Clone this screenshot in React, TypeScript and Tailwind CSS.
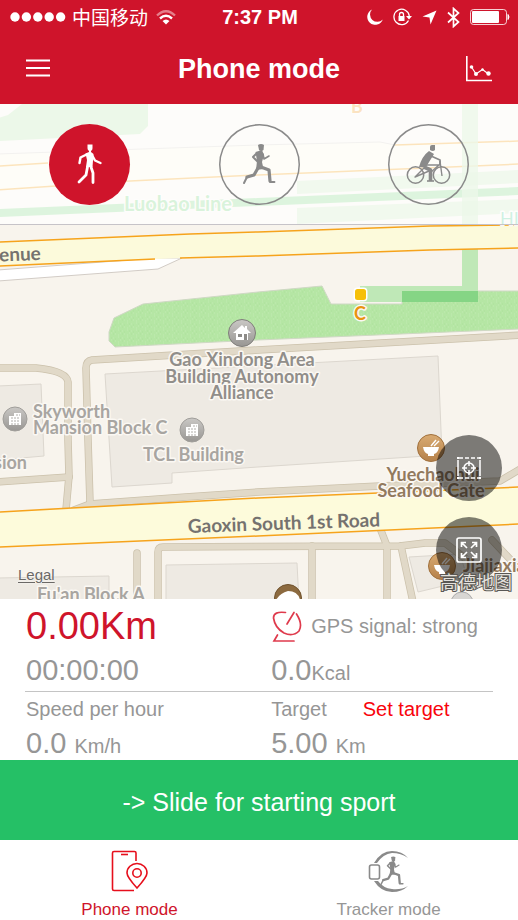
import { useState } from "react";

type Mode = "walk" | "run" | "bike";

const MINOR_ROADS = [
  "M-4 368 H36 Q67 371 68 382 V440 L69 476 L66 510",
  "M-4 482 L69 477",
  "M522 335 L258 350 L92 360 Q86 361 86 368 L88 440 L90 503",
  "M74 510 L90 504 L186 497 L258 492 L380 486 L500 481 L522 468",
  "M137 553 V602",
  "M158 602 V552 Q158 547 163 547 L400 546 L425 543 H445 L470 562",
  "M312 546 V602",
  "M380 528 L387 546 V602",
  "M401 546 L413 602",
  "M492 540 L522 572",
];

const BLOCKS = [
  "M105 374 L438 356 L442 455 L258 467 L172 473 V483 L112 487 Z",
  "M-2 386 L41 384 L44 456 L-2 460 Z",
  "M166 565 L297 563 L299 602 H166 Z",
  "M-2 578 L109 576 V602 H-2 Z",
  "M409 557 L460 554 L468 580 L418 592 Z",
];

function BuildingPin({ x, y }: { x: number; y: number }) {
  return (
    <g transform={`translate(${x} ${y})`}>
      <circle r="12" fill="url(#grayPin)" stroke="#a09e9a" />
      <path d="M-6 -3 H-1 V-6 H6 V6 H-6 Z" fill="#fff" />
      <path d="M-4 -1 H5 M-4 2 H5 M1 -4 H5 M-4 5 H5" stroke="#b0aeaa" strokeDasharray="2 1" />
    </g>
  );
}

function FoodPin({ x, y }: { x: number; y: number }) {
  return (
    <g transform={`translate(${x} ${y})`}>
      <circle r="13.5" fill="url(#brownPin)" stroke="#a0703c" />
      <path d="M-8 -1 H8 Q7 5 3 6 V8 H-3 V6 Q-7 5 -8 -1 Z" fill="#fff" />
      <path d="M0 -2 L5 -8 M3 -2 L8 -7" stroke="#fff" strokeWidth="1.4" />
    </g>
  );
}

function MapCanvas() {
  return (
    <svg
      viewBox="0 104 518 495"
      preserveAspectRatio="xMidYMid slice"
      className="absolute inset-0 h-full w-full font-[Lato,'Open_Sans',sans-serif]"
      aria-label="Map"
    >
      <defs>
        <linearGradient id="grayPin" x1="0" y1="0" x2="0" y2="1">
          <stop offset="0" stopColor="#cac8c5" />
          <stop offset="1" stopColor="#989693" />
        </linearGradient>
        <linearGradient id="brownPin" x1="0" y1="0" x2="0" y2="1">
          <stop offset="0" stopColor="#d9ab72" />
          <stop offset="1" stopColor="#b5814a" />
        </linearGradient>
        <pattern id="grass" width="9" height="7" patternUnits="userSpaceOnUse">
          <rect width="9" height="7" fill="#b5e6a4" />
          <path d="M1 1 h1 M5 2 h1 M3 4 h1 M7 5 h1 M1 6 h1" stroke="#c2ebb3" />
          <path d="M3 2 h1 M7 3 h1 M5 5 h1" stroke="#ade19c" />
        </pattern>
      </defs>
      <rect y="100" width="518" height="500" fill="#f8f4ed" />

      {/* upper avenue and metro */}
      <path d="M-2 118 L8 115 L22 104 H148 V126 L140 134 L-2 141 Z" fill="#bfe6b5" />
      <path d="M-2 154 L258 145 L380 142 L395 145 L520 141 V164 L258 175 L-2 190 Z" fill="#fbf9e6" />
      <path d="M-2 154 L258 145 L380 142 L395 145" fill="none" stroke="#d6d2cc" />
      <path d="M-2 166 L48 163 M395 145 L520 141 M-2 190 L130 181 L258 175 L520 164" fill="none" stroke="#f6a623" strokeWidth="1.5" />
      <path d="M297 181 L520 170 V183 L297 194 Z M297 208 L520 199 V213 L297 224 Z" fill="#bfe6b5" opacity=".7" />
      <path d="M-2 213 L258 202 L520 191" fill="none" stroke="#8edb92" strokeWidth="8" />
      <path d="M462 104 H478 V232 H462 Z" fill="#bfe6b5" opacity=".8" />

      {BLOCKS.map((d) => (
        <path key={d} d={d} fill="#eeeae3" stroke="#dcd7cf" />
      ))}
      <g fill="none" strokeLinejoin="round" strokeLinecap="round">
        {MINOR_ROADS.map((d) => (
          <path key={d} d={d} stroke="#cbc1ab" strokeWidth="7.5" />
        ))}
        {MINOR_ROADS.map((d) => (
          <path key={d} d={d} stroke="#e1d9c8" strokeWidth="6" />
        ))}
      </g>

      {/* park and station passage */}
      <path
        d="M114 318 L143 304 L258 292 L322 286 L331 304 H402 V291 H520 V329 L258 340 L115 347 L109 341 V332 Z"
        fill="url(#grass)"
        stroke="#cfd8c4"
      />
      <path d="M462 246 H478 V302 H360 V286 H462 Z" fill="#bfe8b7" />
      <path d="M402 291 H478 V302 H402 Z" fill="#85d585" />

      <path d="M-2 270 L155 258 H182 L158 269 L-2 281 Z" fill="#fff" stroke="#d2ccc6" />
      <path d="M-2 242 L190 234 L258 232 L345 229 L430 226 L520 225 V248 L430 250 L258 256 L180 258 L-2 266 Z" fill="#fcfadb" />
      <path
        d="M-2 242 L190 234 L258 232 L345 229 L430 226 L520 225 M-2 266 L155 259 M180 258 L258 256 L430 250 L520 248"
        fill="none"
        stroke="#f6a31c"
        strokeWidth="1.5"
      />
      <path d="M-2 512 L258 498 L520 487 V524 L258 536 L-2 547 Z" fill="#fdfbdb" />
      <path d="M-2 512 L258 498 L520 487 M-2 547 L258 536 L520 524" fill="none" stroke="#f6a31c" strokeWidth="1.5" />

      <g transform="translate(242 333)">
        <circle r="13.5" fill="url(#grayPin)" stroke="#7f7d7a" />
        <path d="M-9 0 L0 -8 L3 -5 V-7 H5 V-4 L9 0 H6 V7 H-6 V0 Z" fill="#fff" />
        <path d="M-4 1 H0 V4 H-4 Z M2 1 H5 V7 H2 Z" fill="#8d8b88" />
      </g>
      <BuildingPin x={15} y={419} />
      <BuildingPin x={192} y={430} />
      <FoodPin x={431} y={448} />
      <FoodPin x={442} y={566} />
      <g transform="translate(288 598)">
        <circle r="13.5" fill="#8c6a3f" stroke="#6f522d" />
        <path d="M-12 2 Q-8 -5 0 -7 Q10 -7 12 2 Z" fill="#fff" />
      </g>
      <circle cx="462" cy="603" r="11" fill="#d8d6d3" stroke="#aaa" />

      <rect x="355" y="289" width="11" height="11" rx="2.5" fill="#f6c008" stroke="#fff" strokeWidth="3" className="[paint-order:stroke]" />

      <g fontSize="18" fontWeight="700" stroke="#fbf8f3" strokeWidth="3" strokeLinejoin="round" className="[paint-order:stroke]">
        <g fill="#918e8a" textAnchor="middle">
          <text x="242" y="366">Gao Xindong Area</text>
          <text x="242" y="383">Building Autonomy</text>
          <text x="242" y="399">Alliance</text>
        </g>
        <g fill="#a8a5a1">
          <text x="33" y="418">Skyworth</text>
          <text x="33" y="434">Mansion Block C</text>
          <text x="143" y="461">TCL Building</text>
          <text x="27" y="469" textAnchor="end">Mansion</text>
          <text x="37" y="601">Fu'an Block A</text>
        </g>
        <g fill="#927a5e">
          <text x="433" y="481" textAnchor="middle">Yuechaohui</text>
          <text x="431" y="497" textAnchor="middle">Seafood Cate</text>
          <text x="463" y="572">Jiajiaxiang</text>
        </g>
        <text x="360" y="320" fill="#e8940f" textAnchor="middle">C</text>
        <text x="357" y="113" fill="#f0a030" textAnchor="middle">B</text>
        <text x="124" y="211" fill="#7fd688" fontSize="20">Luobao Line</text>
        <text x="500" y="225" fill="#5fd0a0" fontWeight="400">HIGH</text>
      </g>
      <g fontWeight="700" fill="#75726f" stroke="#fdfbdb" strokeWidth="3" className="[paint-order:stroke]">
        <text x="41" y="260" fontSize="19" textAnchor="end" transform="rotate(-2 41 260)">Avenue</text>
        <text x="188" y="533" fontSize="19" transform="rotate(-2 188 533)">Gaoxin South 1st Road</text>
      </g>
    </svg>
  );
}

function WalkIcon() {
  return (
    <svg viewBox="0 0 81 81" className="h-full w-full" fill="none" stroke="currentColor" strokeLinecap="round" strokeLinejoin="round">
      <path d="M38.5 20.5 H43.5 V24 Q43.5 27 41 27 Q38.5 27 38.5 24 Z" fill="currentColor" stroke="none" />
      <path d="M36.500 29.500 L40 28 V26 H42 V28 L44.500 30 L43.500 43 H37 L38 36 Z" fill="currentColor" stroke="none" />
      <path d="M37.500 30.500 L31.500 33.500 L30.500 39" strokeWidth="2.400" />
      <path d="M43 31 L46 36.500 L51.500 39" strokeWidth="2.400" />
      <path d="M38.500 43 L37 51 L30 58" strokeWidth="2.800" />
      <path d="M42 43 L44 49 V58.500" strokeWidth="2.800" />
    </svg>
  );
}

function Runner() {
  return (
    <g fill="none" stroke="currentColor" strokeLinecap="round" strokeLinejoin="round">
      <path d="M39 21 Q42 19 45 21 L44.500 26 Q42 28 40 26 Z" fill="currentColor" stroke="none" />
      <path d="M36.500 28 L43 26 L45 31 L43 38 L44.500 45 L37 46 L38 37 Z" fill="currentColor" stroke="none" />
      <path d="M38 29 L34 33 L39 38" strokeWidth="2" />
      <path d="M44 30 L45 35 L50 32" strokeWidth="1.600" />
      <path d="M42 43 L50 46 L51 57" strokeWidth="3.200" />
      <path d="M51 58 H55.500" strokeWidth="1.800" />
      <path d="M39 44 L35 51 L28 53" strokeWidth="3.200" />
      <path d="M28 53 L25 59" strokeWidth="2" />
    </g>
  );
}

function RunIcon() {
  return (
    <svg viewBox="0 0 81 81" className="h-full w-full">
      <Runner />
    </svg>
  );
}

function BikeIcon() {
  return (
    <svg viewBox="0 0 81 81" className="h-full w-full" fill="none" stroke="currentColor" strokeLinejoin="round">
      <circle cx="27.500" cy="51" r="8.200" strokeWidth="1.500" />
      <circle cx="53.500" cy="51" r="8.200" strokeWidth="1.500" />
      <path d="M42 23 Q42 21 44 21 H47 V26 Q45 28 42 26 Z" fill="currentColor" stroke="none" />
      <path d="M41 27 L46 30 L38 43 L42 44 L31 43 Q34 32 41 27 Z" fill="currentColor" stroke="none" />
      <path d="M43 32 L52 36 V41" strokeWidth="1.800" />
      <path d="M52 37 L54 52 M52 41 L37 41 M52 40 L42 49 M37 43 L27 53 L41 47" strokeWidth="1.400" />
      <path d="M36 43 L42.500 46 V57" strokeWidth="3.600" />
      <path d="M39 57 H46" strokeWidth="1.600" />
    </svg>
  );
}

const MODES = [
  { id: "walk" as Mode, label: "Walk", Icon: WalkIcon },
  { id: "run" as Mode, label: "Run", Icon: RunIcon },
  { id: "bike" as Mode, label: "Bike", Icon: BikeIcon },
];

function StatusBar() {
  return (
    <div className="grid h-[34px] grid-cols-[1fr_auto_1fr] items-center pl-2.5 pr-2">
      <div className="flex items-center">
        <svg width="56" height="10" viewBox="0 0 56 10" fill="currentColor">
          <circle cx="5" cy="5" r="4.700" />
          <circle cx="16.400" cy="5" r="4.700" />
          <circle cx="27.800" cy="5" r="4.700" />
          <circle cx="39.200" cy="5" r="4.700" />
          <circle cx="50.600" cy="5" r="4.700" />
        </svg>
        <span className="ml-1.5 font-['Noto_Sans_CJK_SC',sans-serif] text-[19px] leading-5">中国移动</span>
        <svg width="20" height="15" viewBox="0 0 20 15" fill="none" stroke="currentColor" strokeWidth="2.400" className="ml-2">
          <path d="M1 5.500 Q10 -3 19 5.500" opacity=".45" />
          <path d="M4 8.500 Q10 3 16 8.500" />
          <path d="M6.500 11 Q10 8 13.500 11 L10 14.500 Z" fill="currentColor" stroke="none" />
        </svg>
      </div>
      <span className="text-[20px] leading-6 font-bold">7:37 PM</span>
      <div className="flex items-center justify-end gap-2.5">
        <svg width="16" height="16" viewBox="0 0 16 16" fill="currentColor">
          <path d="M5 .5 A8 8 0 1 0 15.800 10.500 A7 7 0 0 1 5 .5 Z" />
        </svg>
        <svg width="19" height="18" viewBox="0 0 19 18" fill="none" stroke="currentColor" strokeWidth="1.300">
          <path d="M15.500 12.500 A7.700 7.700 0 1 1 16.300 8" />
          <path d="M13 8 H19 L16 11.500 Z" fill="currentColor" stroke="none" />
          <path d="M5.500 8 H11.500 V13 H5.500 Z" fill="currentColor" stroke="none" />
          <path d="M6.500 8 V6.500 A2 2 0 0 1 10.500 6.500 V8" />
        </svg>
        <svg width="15" height="15" viewBox="0 0 15 15" fill="currentColor">
          <path d="M14.500 0.500 L8.500 14.500 L7.500 7.500 L0.500 6.500 Z" />
        </svg>
        <svg width="13" height="21" viewBox="0 0 13 21" fill="none" stroke="currentColor" strokeWidth="1.700">
          <path d="M1 5.500 L11.500 15 L6.500 19.500 V1.500 L11.500 6 L1 15.500" />
        </svg>
        <svg width="40" height="16" viewBox="0 0 40 16">
          <rect x=".5" y=".5" width="36" height="15" rx="3" fill="none" stroke="currentColor" opacity=".8" />
          <rect x="2" y="2" width="27" height="12" rx="1" fill="currentColor" />
          <path d="M38 5.500 Q40 8 38 10.500 Z" fill="currentColor" stroke="currentColor" />
        </svg>
      </div>
    </div>
  );
}

export default function App() {
  const [mode, setMode] = useState<Mode>("walk");

  return (
    <main className="min-h-screen bg-white font-['Liberation_Sans',Arial,sans-serif] text-[#969696]">
      <header className="bg-[#cf142b] text-white">
        <StatusBar />
        <div className="grid h-[70px] grid-cols-[1fr_auto_1fr] items-center px-[26px]">
          <button type="button" aria-label="Menu" className="justify-self-start">
            <svg width="24" height="20" viewBox="0 0 24 20" stroke="currentColor" strokeWidth="2.200">
              <path d="M0 1.500 H24 M0 9 H24 M0 16.500 H24" />
            </svg>
          </button>
          <h1 className="text-[27px] leading-8 font-bold">Phone mode</h1>
          <button type="button" aria-label="Statistics" className="justify-self-end">
            <svg width="26" height="26" viewBox="0 0 26 26" fill="none" stroke="currentColor">
              <path d="M.8 0 V24.500 H26" strokeWidth="1.600" />
              <path d="M5.500 11 L10 18 L16.500 13.500 L22.500 18" strokeWidth="1.200" />
              <g fill="currentColor" stroke="none">
                <circle cx="5.500" cy="11" r="1.800" />
                <circle cx="10" cy="18" r="2" />
                <circle cx="16.500" cy="13.500" r="1.200" />
                <circle cx="22.500" cy="17.500" r="2.200" />
              </g>
            </svg>
          </button>
        </div>
      </header>

      <section className="relative h-[495px] overflow-hidden">
        <MapCanvas />
        <div className="relative flex h-[121px] items-center justify-between border-b border-[#c6c3c8] bg-white/70 px-[49px]">
          {MODES.map(({ id, label, Icon }) => (
            <button
              key={id}
              type="button"
              aria-label={label}
              aria-pressed={mode === id}
              onClick={() => setMode(id)}
              className={
                mode === id
                  ? "size-[81px] rounded-full bg-[#cf142b] text-white"
                  : "size-[81px] rounded-full text-[#8a8a8a] shadow-[inset_0_0_0_1.5px_#8a8a8a]"
              }
            >
              <Icon />
            </button>
          ))}
        </div>

        <a
          href="#legal"
          className="absolute bottom-4 left-[18px] text-[15px] leading-4 text-[#6b6966] underline underline-offset-2 [text-shadow:0_0_2px_#fff]"
        >
          Legal
        </a>

        <div className="absolute right-4 bottom-4 flex flex-col gap-4">
          <button type="button" aria-label="Locate" className="flex size-[66px] items-center justify-center rounded-full bg-black/50 text-white">
            <svg width="26" height="24" viewBox="0 0 26 24" fill="none" stroke="currentColor" strokeWidth="1.500">
              <path d="M3 2 H23 M3 22 H23" strokeDasharray="4 2" />
              <path d="M2 4 V20 M24 4 V20" />
              <path d="M1 2 H3 M23 2 H25 M1 22 H3 M23 22 H25" strokeWidth="2" />
              <circle cx="13" cy="12" r="5" />
              <path d="M13 5 V10 M13 14 V19 M6 12 H11 M15 12 H20" />
            </svg>
          </button>
          <button type="button" aria-label="Full screen" className="flex size-[66px] items-center justify-center rounded-full bg-black/50 text-white">
            <svg width="26" height="26" viewBox="0 0 26 26" fill="none" stroke="currentColor" strokeWidth="1.700">
              <rect x="1" y="1" width="24" height="24" rx="2" />
              <path d="M5.500 10 V5.500 H10 M5.500 5.500 L11 11 M16 5.500 H20.500 V10 M20.500 5.500 L15 11 M5.500 16 V20.500 H10 M5.500 20.500 L11 15 M16 20.500 H20.500 V16 M20.500 20.500 L15 15" />
            </svg>
          </button>
        </div>
        <span className="absolute right-1.5 bottom-2 font-['Noto_Sans_CJK_SC',sans-serif] text-[18px] leading-5 text-[#e4e1dc] [-webkit-text-stroke:2px_#5a5855] [paint-order:stroke]">
          高德地图
        </span>
      </section>

      <section className="px-[25px]">
        <div className="grid grid-cols-[21fr_19fr] border-b border-[#c4c4c4] pb-1 pl-px">
          <p className="text-[38px] leading-[54px] text-[#cf142b]">0.00Km</p>
          <p className="flex items-center gap-2 text-[20px] leading-[54px]">
            <svg width="32" height="32" viewBox="0 0 32 32" fill="none" stroke="#df3a4c" strokeWidth="1.700" strokeLinecap="round">
              <path d="M14.500 2.500 Q2.500 1 2.500 8 Q4 18 13 23 Q22 27 28 21 Q32 14 25.500 4" />
              <path d="M16 14 L23 2.500" />
              <path d="M6.500 25 L3 31 H23" />
            </svg>
            GPS signal: strong
          </p>
          <p className="text-[29px] leading-[34px]">00:00:00</p>
          <p className="text-[29px] leading-[34px]">
            0.0<span className="text-[20px] leading-none">Kcal</span>
          </p>
        </div>
        <div className="grid grid-cols-[21fr_19fr] pl-px">
          <p className="text-[20px] leading-[34px]">Speed per hour</p>
          <p className="flex gap-9 text-[20px] leading-[34px]">
            Target
            <button type="button" className="text-[#f8040c]">
              Set target
            </button>
          </p>
          <p className="text-[29px] leading-[34px]">
            0.0 <span className="text-[20px] leading-none">Km/h</span>
          </p>
          <p className="text-[29px] leading-[34px]">
            5.00 <span className="text-[20px] leading-none">Km</span>
          </p>
        </div>
      </section>

      <button type="button" className="block h-20 w-full bg-[#25c066] pt-1 text-[25px] leading-8 text-white">
        -&gt; Slide for starting sport
      </button>

      <nav className="grid grid-cols-2 text-[17px] leading-5">
        <a href="#phone" aria-current="page" className="flex flex-col items-center gap-2 pt-2.5 text-[#cf142b]">
          <svg width="38" height="42" viewBox="0 0 38 42" fill="none" stroke="#e60f1c" strokeWidth="1.600">
            <path d="M25 11 V3 Q25 1.500 23.500 1.500 H3 Q1.500 1.500 1.500 3 V39 Q1.500 40.500 3 40.500 H23" />
            <path d="M10 4.500 H17" />
            <path d="M26 38 Q16 27 16 23 A10 9.500 0 0 1 36 23 Q36 27 26 38 Z" />
            <circle cx="26" cy="23" r="4.200" />
          </svg>
          Phone mode
        </a>
        <a href="#tracker" className="flex flex-col items-center gap-2 pt-2.5">
          <svg width="42" height="42" viewBox="0 0 42 42" className="text-[#8a8a8a]">
            <path d="M6 13 Q13 1 24 1 Q34 1 40 8 Q33 3 24 3 Q15 4 9 13 Z" fill="currentColor" />
            <path d="M6 31 Q13 42 24 42 Q34 42 40 36 Q33 40 24 39 Q15 38 10 31 Z" fill="currentColor" />
            <rect x="1.500" y="15" width="10" height="14" rx="2" fill="none" stroke="currentColor" strokeWidth="1.600" />
            <g transform="translate(-5 -8) scale(.72)">
              <Runner />
            </g>
          </svg>
          Tracker mode
        </a>
      </nav>
    </main>
  );
}
